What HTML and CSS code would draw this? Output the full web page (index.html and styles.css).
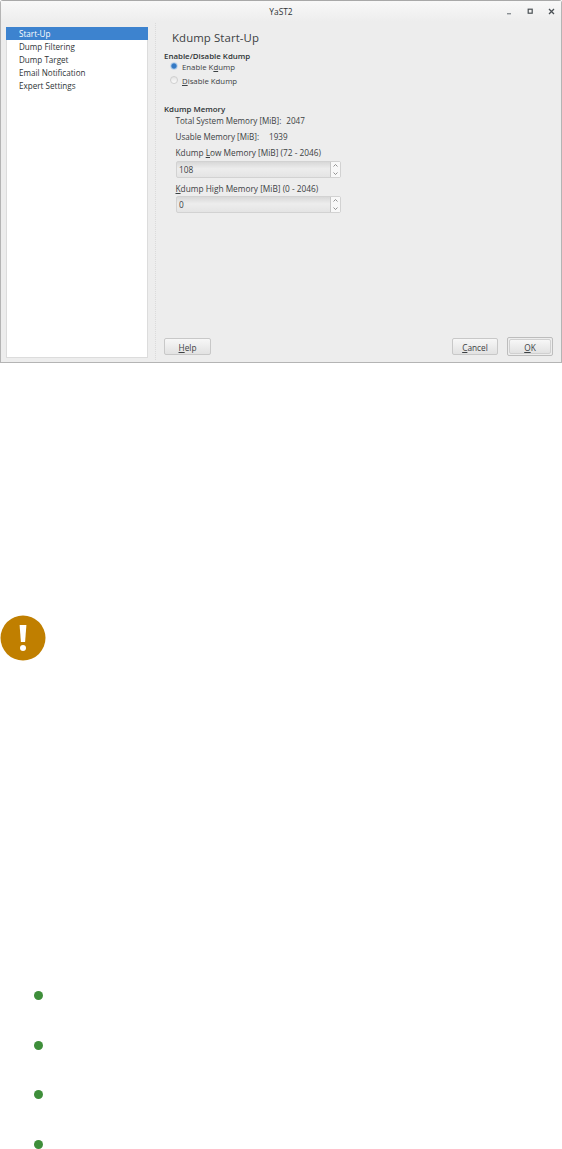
FILE: index.html
```html
<!DOCTYPE html>
<html lang="en">
<head>
<meta charset="utf-8">
<title>YaST2</title>
<link rel="stylesheet" href="styles.css">
</head>
<body>
<div class="window">
  <header class="titlebar">
    <span class="title">YaST2</span>
    <div class="controls">
      <svg class="ctl" viewBox="0 0 7 7"><rect x="1" y="5" width="4" height="1.4" fill="#8a9094"/></svg>
      <svg class="ctl" viewBox="0 0 7 7"><rect x="1.2" y="1.2" width="4" height="4" fill="none" stroke="#4a5054" stroke-width="1.2"/></svg>
      <svg class="ctl" viewBox="0 0 7 7"><path d="M1 1L6 6M6 1L1 6" stroke="#4a5054" stroke-width="1.3"/></svg>
    </div>
  </header>
  <div class="main">
    <nav class="tree">
      <div class="tree-item selected">Start-Up</div>
      <div class="tree-item">Dump Filtering</div>
      <div class="tree-item">Dump Target</div>
      <div class="tree-item">Email Notification</div>
      <div class="tree-item">Expert Settings</div>
    </nav>
    <div class="divider"></div>
    <section class="content">
      <h1 class="heading">Kdump Start-Up</h1>
      <h2 class="group">Enable/Disable Kdump</h2>
      <div class="radio-row first"><span class="radio on"></span><span>Enable K<u>d</u>ump</span></div>
      <div class="radio-row"><span class="radio"></span><span><u>D</u>isable Kdump</span></div>
      <h2 class="group memory">Kdump Memory</h2>
      <div class="indent">
        <div class="stat one"><span>Total System Memory [MiB]:</span><span>2047</span></div>
        <div class="stat two"><span>Usable Memory [MiB]:</span><span>1939</span></div>
        <div class="spin-label">Kdump <u>L</u>ow Memory [MiB] (72 - 2046)</div>
        <div class="spin"><span class="spin-value">108</span><span class="arrows"><svg viewBox="0 0 9 15"><path d="M2.5 4.5L4.5 2.5L6.5 4.5M2.5 10.5L4.5 12.5L6.5 10.5" fill="none" stroke="#777" stroke-width=".8"/></svg></span></div>
        <div class="spin-label second"><u>K</u>dump High Memory [MiB] (0 - 2046)</div>
        <div class="spin second"><span class="spin-value">0</span><span class="arrows"><svg viewBox="0 0 9 15"><path d="M2.5 4.5L4.5 2.5L6.5 4.5M2.5 10.5L4.5 12.5L6.5 10.5" fill="none" stroke="#777" stroke-width=".8"/></svg></span></div>
      </div>
      <div class="buttons">
        <button class="btn"><u>H</u>elp</button>
        <div class="btn-right">
          <button class="btn cancel"><u>C</u>ancel</button>
          <span class="default-ring"><button class="btn ok"><u>O</u>K</button></span>
        </div>
      </div>
    </section>
  </div>
</div>
<div class="notice">
  <svg class="notice-icon" viewBox="0 0 46 46"><circle cx="23" cy="23" r="22.5" fill="#c07f00"/><path d="M19.6 10h6.8l-1.3 17h-4.2z" fill="#fff"/><circle cx="23" cy="33" r="3" fill="#fff"/></svg>
</div>
<ul class="bullets">
  <li class="dot"></li>
  <li class="dot"></li>
  <li class="dot"></li>
  <li class="dot"></li>
</ul>
</body>
</html>
```
FILE: styles.css
```css
* { box-sizing: border-box; }
html, body { margin: 0; padding: 0; background: #fff; }
body { width: 562px; height: 1149px; overflow: hidden; font-family: "Open Sans", "Noto Sans", sans-serif; font-size: 8.3px; color: #2e3436; }
u { text-decoration-thickness: 1px; text-underline-offset: 1px; }
.window { width: 562px; height: 363px; background: #ededed; border: 1px solid #b4b4b4; border-top: 1px solid #a8a8a8; border-radius: 3px 3px 0 0; display: flex; flex-direction: column; }
.titlebar { height: 21px; flex: none; position: relative; display: flex; align-items: center; justify-content: center; background: linear-gradient(#f8f8f8, #ededed); }
.title { color: #2e3436; font-size: 8.4px; }
.controls { position: absolute; right: 6px; top: 7px; display: flex; gap: 14px; }
.ctl { width: 7px; height: 7px; display: block; }
.main { flex: 1; display: flex; padding: 5px 0 4px 5px; min-height: 0; }
.tree { width: 142px; flex: none; background: #fff; border: 1px solid #dcdcdc; border-top: 0; font-size: 8.1px; }
.tree-item { height: 13px; line-height: 13px; padding-left: 12px; color: #2e3436; }
.tree-item.selected { background: #3d83cf; color: #fff; margin: 0 -1px; padding-left: 13px; }
.divider { width: 1px; margin: -4px 0 -2px 7px; flex: none; border-left: 1px dotted #dadada; }
.content { flex: 1; display: flex; flex-direction: column; padding: 0 8px 2px 8px; min-width: 0; }
.heading { margin: 3px 0 0 8px; font-size: 11.4px; line-height: 16px; font-weight: 400; color: #3c4143; letter-spacing: .1px; }
.group { margin: 4px 0 0; font-size: 7.9px; line-height: 12px; font-weight: 600; color: #2e3436; }
.group.memory { margin-top: 15px; }
.radio-row { display: flex; align-items: center; gap: 4px; height: 14px; margin-left: 6px; color: #3c4143; font-size: 7.8px; }
.radio-row.first { margin-top: -2px; }
.radio { width: 8px; height: 8px; border-radius: 50%; border: 1px solid #cfcfcf; background: linear-gradient(#e4e4e4, #fbfbfb); flex: none; margin-top: -3px; }
.radio.on { background: radial-gradient(circle, #3479c4 0 45%, #7fb0e2 80%); border-color: #c3d6ea; }
.indent { padding-left: 11.5px; }
.stat { display: flex; height: 13px; line-height: 13px; color: #3c4143; font-size: 8.1px; }
.stat.one { gap: 5px; margin-top: -1px; }
.stat.two { gap: 10px; margin-top: 3px; }
.spin-label { line-height: 13px; margin-top: 3px; color: #3c4143; }
.spin-label.second { margin-top: 4px; }
.spin { width: 165px; height: 17px; display: flex; margin-top: 2px; margin-left: .5px; border: 1px solid #d2d2d2; border-radius: 2px; background: linear-gradient(#d8d8d8, #ededed 45%, #e4e4e4); }
.spin.second { margin-top: 1px; }
.spin-value { flex: 1; padding-left: 2px; line-height: 15px; color: #3c4143; }
.arrows { width: 10px; flex: none; border-left: 1px solid #c6c6c6; background: #f8f8f8; }
.arrows svg { width: 9px; height: 15px; display: block; }
.buttons { margin-top: auto; display: flex; justify-content: space-between; align-items: center; }
.btn-right { display: flex; align-items: center; gap: 9px; }
.btn { width: 47px; height: 17px; padding: 1px 0 0; font: inherit; color: #3c4143; border: 1px solid #c8c8c8; border-radius: 2px; background: linear-gradient(#f7f7f7, #e2e2e2); }
.btn.cancel { width: 46px; }
.default-ring { display: block; border: 1px solid #bdbdbd; border-radius: 2px; padding: 1px; }
.btn.ok { width: 42px; height: 15px; display: block; border-color: #d0d0d0; }
.notice { margin-top: 252px; height: 46px; }
.notice-icon { width: 46px; height: 46px; display: block; }
.bullets { list-style: none; margin: 330px 0 0 34px; padding: 0; display: flex; flex-direction: column; gap: 40.7px; }
.dot { width: 9px; height: 9px; border-radius: 50%; background: #3e8e3a; }
```
